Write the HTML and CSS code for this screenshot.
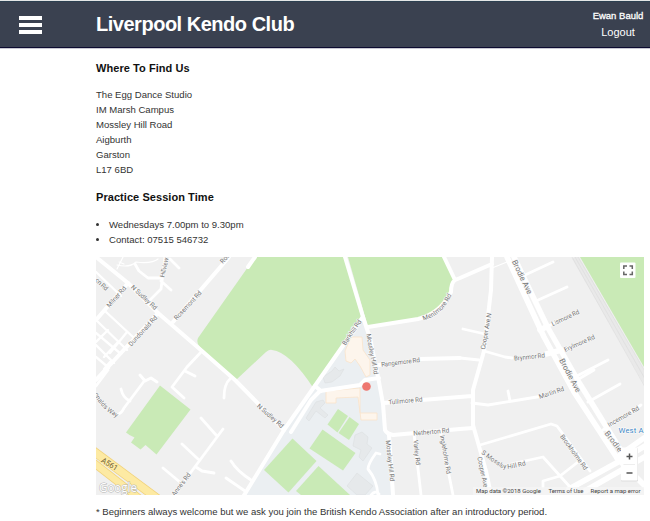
FILE: index.html
```html
<!DOCTYPE html>
<html lang="en">
<head>
<meta charset="utf-8">
<title>Liverpool Kendo Club</title>
<link rel="stylesheet" href="styles.css">
</head>
<body>
<header class="bar">
  <div class="menu" aria-label="Menu"><span></span><span></span><span></span></div>
  <h1 class="title"><span>Liverpool Kendo Club</span></h1>
  <div class="user"><span class="name">Ewan Bauld</span><span class="logout">Logout</span></div>
</header>
<main class="content">
  <h2 class="head">Where To Find Us</h2>
  <p class="address">The Egg Dance Studio<br>IM Marsh Campus<br>Mossley Hill Road<br>Aigburth<br>Garston<br>L17 6BD</p>
  <h2 class="head second">Practice Session Time</h2>
  <ul class="times"><li>Wednesdays 7.00pm to 9.30pm</li><li>Contact: 07515 546732</li></ul>
  <div class="map">
    <svg class="canvas" viewBox="96 257 548 238" width="548" height="238">
      <rect x="96" y="257" width="548" height="238" fill="#f0f0f0"/>
      <!-- campus -->
      <path d="M362 318L366 330L378 378L382 400L384 430L390 440L392 495H244L284 430L318 382Z" fill="#ebeff2"/>
      <!-- parks -->
      <g fill="#c9eab6">
        <path d="M255 257H345L361 316L314 389Q290 352 272 350Q270 349 266 352L236 380L200 347Q196 343 198 338Z"/>
        <path d="M348 257H444L454 281Q448 298 444 303Q434 316 418 319L368 327Z"/>
        <path d="M580 257H644V367Z"/>
        <path d="M160 385.500L190.500 409.500L156.500 454.500L145.500 445L140.500 449.500L131 442.500L134.500 437.500L129.500 435L126 432.500Z"/>
        <path d="M338 409L348 416L337.500 432.500L327.500 424.500Z"/><path d="M349.500 417L359 424L349 440L338.500 433Z"/>
        <path d="M322.500 429.500L355.500 453L343 470.500L309.500 448.500Z"/>
        <path d="M292.500 438.500L316.500 461L288.500 492.500L264 470Z"/>
        <path d="M318.500 466L350 495H301L296 491Z"/>
      </g>
      <!-- buildings -->
      <g fill="#e6e9eb" stroke="#dcdfe1" stroke-width=".6">
        <path d="M323 377L332 371L335 367L339 371L344 369L340 376L332 382L325 383Z"/>
        <path d="M306 418L316 402L323 400L325 403L320 408L328 415L325 418L316 411L309 421Z"/>
        <path d="M355 435L362 432L368 437L367 444L372 448L363 461L359 457L361 450L353 446Z"/>
        <path d="M357 473L373 486L365 495H357L347 486Z"/>
      </g>
      <g fill="#fdf5ec" stroke="#fae3ca" stroke-width=".8">
        <path d="M351 337H362L363 350L370 360L370 375L366 377L360 366L355 359L351 363L346 361L345 351Z"/>
        <path d="M326 391L360 388V413H377V420H361L358 397L336 398V403H326Z"/>
      </g>
      <!-- railway -->
      <path d="M575 257L648 384" stroke="#e9e9e9" stroke-width="7" fill="none"/>
      <path d="M572 257L645 387M575 257L648 384M578 257L646 373" stroke="#d8d8d8" stroke-width=".5" fill="none"/>
      <!-- trunk road -->
      <g fill="none"><path d="M92 450L158 499" stroke="#f1d27b" stroke-width="9"/><path d="M92 450L158 499" stroke="#fdeaa3" stroke-width="7.500"/>
      <path d="M90 460L140 499" stroke="#f1d27b" stroke-width="8"/><path d="M90 460L140 499" stroke="#fdeaa3" stroke-width="6.500"/></g>
      <!-- minor streets -->
      <g class="street fine"><path d="M117 269L123 257M117 265Q130 268 136 262Q152 264 158 259M119 262L124 264M492 268L507 262"/></g>
      <g class="street minor">
        <path d="M96 272L121 296M105 311L133 337M96 320L127 350M96 333L121 354M96 345L114 363M96 357L109 368M127 332L110 353M118 342L104 357M96 342L108 330M104 369L110 362"/>
      </g>
      <g class="street side">
        <path d="M135 264L139 271L148 278H162M165 257L161 289L149 301M161 281L171 290M170 259L179 268"/>
        <path d="M202 351L187 367L172 387L184 398M185 371L195 376M140 375L145 381L151 378L157 382M145 380L124 408Q121 415 115 415M121 389Q123 398 130 401M96 386L108 370"/>
        <path d="M201 418L216 435M223 429L174 495M182 444L198 459M163 468L181 483M196 467L202 471L214 473M230 379Q224 384 224 398M231 461Q237 471 251 480M226 478L245 491"/>
        <path d="M463 329L485 334M460 358L479 360M484 351L505 357L512 358M525 275L553 262M536 301L567 287M545 328L558 321M555 353L567 348M575 377L608 360M588 402L620 384M603 430L641 405M577 380L594 370M472 403L488 405L543 396M510 401L508 391M480 445L551 424L557 426L590 471M511 464L543 457L570 487M543 487V481L560 476L578 462M414 434L421 495M440 430L453 495M380 454L376 453Q368 464 368 469Q377 480 378 495M371 495Q375 490 379 494"/>
      </g>
      <g class="street main">
        <path d="M128 283L96 320M158 313L96 380M173 322L229 257M248 267L255 257"/>
        <path d="M96 257L128 283L158 313L202 351L235 380L284 430"/>
        <path d="M363 317L284 430L243 497"/>
        <path d="M291 432L311 400L320 391L360 385L365 380L379 378M315 386L321 391"/>
        <path d="M345 257L363 317L370 338L379 382L383 404L385 430Q387 434 393 435L460 429L473 428"/>
        <path d="M389 435L393 495M368 327L418 319Q440 314 451 292Q451 283 455 280L460 278L492 264M455 280L444 257M379 365L394 363M420 359L460 358M384 403L472 396M492 257L491 290L484 351L473 390L473 425L486 471L491 495"/>
      </g>
      <g class="street avenue">
        <path d="M507 257L544 337L574 392L617 458"/><path d="M514 257L548 328L580 384L620 449"/>
        <path d="M540 330L546 327M546 354L562 350M620 455L644 438M569 489L620 461L648 444M585 491L648 455M617 458L646 487"/>
      </g>
      <g class="labels">
        <text transform="translate(101.500 284.500)rotate(43)" textLength="15">on Rd</text>
        <text transform="translate(116.500 297)rotate(-49)" textLength="26">Milner Rd</text>
        <text transform="translate(144 297.500)rotate(43)" textLength="33">N Sudley Rd</text>
        <text transform="translate(164.500 267.500)rotate(-77)" textLength="20">Hillview</text>
        <text transform="translate(188 305.500)rotate(-47)" textLength="37">Rosemont Rd</text>
        <text transform="translate(225 258.500)rotate(-47)">Ros</text>
        <text transform="translate(143 331)rotate(-47)" textLength="39">Dundonald Rd</text>
        <text transform="translate(352 332.500)rotate(-56)" textLength="29">Barkhill Rd</text>
        <text transform="translate(372 354)rotate(79)" textLength="41">Mossley Hill Rd</text>
        <text transform="translate(400.500 362.500)rotate(-7)" textLength="39">Rangemore Rd</text>
        <path id="ment" d="M423.500 320.500Q443 315 452 294" fill="none" stroke="none"/>
        <text class="along"><textPath href="#ment">Mentmore Rd</textPath></text>
        <text transform="translate(565.500 318)rotate(-25)" textLength="30">Lismore Rd</text>
        <text transform="translate(579.500 343.500)rotate(-24)" textLength="33">Erylmore Rd</text>
        <text transform="translate(529.500 357)rotate(-6)" textLength="31">Brynmor Rd</text>
        <text transform="translate(486.300 331.300)rotate(-80)" textLength="37">Cooper Ave N</text>
        <text transform="translate(551.500 393)rotate(-19)" textLength="26">Martin Rd</text>
        <text transform="translate(623.500 416.500)rotate(-30)" textLength="35">Incemore Rd</text>
        <text transform="translate(573.700 452.300)rotate(54)" textLength="42">Brockholme Rd</text>
        <path id="smoss" d="M481 453.500L500 467Q505 471 526 465" fill="none" stroke="none"/>
        <text class="along"><textPath href="#smoss">S Mossley Hill Rd</textPath></text>
        <text transform="translate(482.500 472)rotate(78)" textLength="31">Cooper Ave</text>
        <text transform="translate(405.500 401)rotate(-5)" textLength="34">Tullimore Rd</text>
        <text transform="translate(431.300 432)rotate(-5)" textLength="36">Netherton Rd</text>
        <text transform="translate(390 460.700)rotate(84)" textLength="41">Mossley Hill Rd</text>
        <text transform="translate(416.700 452.500)rotate(84)" textLength="25">Varley Rd</text>
        <text transform="translate(445.300 454.500)rotate(80)" textLength="39">Ingleholme Rd</text>
        <text transform="translate(270.200 416)rotate(41)" textLength="33">N Sudley Rd</text>
        <path id="way" d="M94 394Q101 410 120 419" fill="none" stroke="none"/>
        <text class="along"><textPath href="#way">onalds Way</textPath></text>
        <text transform="translate(181.300 484.500)rotate(-53)" textLength="27">Anne's Rd</text>
        <g class="big">
          <text transform="translate(522 277)rotate(64)" textLength="37">Brodie Ave</text>
          <text transform="translate(570 375.500)rotate(62)" textLength="37">Brodie Ave</text>
          <text transform="translate(613.500 441.500)rotate(52)" textLength="24">Brodie</text>
          <text class="trunk" transform="translate(109.500 464.300)rotate(32)" textLength="18">A561</text>
        </g>
      </g>
      <text class="place" x="618.500" y="432.500" textLength="25">West A</text>
      <circle cx="366.500" cy="386.500" r="4.300" fill="#ee7770"/>
      <text class="logo" x="99" y="491.500" textLength="38" lengthAdjust="spacingAndGlyphs">Google</text>
      <rect x="473" y="487" width="171" height="8" fill="#f5f5f5" fill-opacity=".75"/>
      <g class="credit"><text x="476" y="493.200" textLength="65">Map data ©2018 Google</text><text x="548.500" y="493.200" textLength="35">Terms of Use</text><text x="590.500" y="493.200" textLength="50">Report a map error</text></g>
      <rect x="620" y="262.500" width="15.500" height="15.500" rx="1" fill="#fff"/>
      <path d="M623.800 269V266H627M629.500 266H632.300V269M632.300 271.500V274.500H629.500M627 274.500H623.800V271.500" fill="none" stroke="#666" stroke-width="1.500"/>
      <rect x="621" y="448" width="17" height="33.500" rx="1" fill="#ddd"/><rect x="621" y="447.500" width="16.500" height="33" rx="1" fill="#fff"/>
      <path d="M623.500 464.500H635" stroke="#e6e6e6" stroke-width=".7"/>
      <path d="M626.500 456.500H632.500M629.500 453.500V459.500M626.500 473H632.500" stroke="#555" stroke-width="1.500"/>
    </svg>
  </div>
  <p class="note">* Beginners always welcome but we ask you join the British Kendo Association after an introductory period.</p>
</main>
</body>
</html>
```
FILE: styles.css
```css
* { box-sizing: border-box; }
body { margin: 0; height: 521px; overflow: hidden; background: #fff; color: #333; font-family: "Liberation Sans", Arial, sans-serif; }
.bar { display: flex; height: 49px; padding-top: 1px; background: #3a4150; border-top: 1px solid #e4e6e6; border-bottom: 1px solid #c9c9d2; box-shadow: inset 0 1px #2c4051, inset 0 -1px #0c0b30; }
.menu { display: flex; flex-direction: column; gap: 3px; width: 96px; padding: 14px 0 0 19px; }
.menu span { width: 23px; height: 4px; background: #fff; }
.title { flex: 1; margin: 0; color: #fff; font-size: 20px; line-height: 45px; letter-spacing: -.48px; }
.user { display: flex; flex-direction: column; align-items: center; width: 64px; padding-top: 6px; color: #fff; }
.name { font-size: 9.500px; line-height: 15px; -webkit-text-stroke: .3px #fff; white-space: nowrap; }
.logout { font-size: 11px; line-height: 18px; }
.content { width: 548px; margin-left: 96px; }
.head { margin: 0; padding-top: 13px; font-size: 11px; line-height: 13px; color: #111; letter-spacing: .06px; }
.second { padding-top: 14px; }
.address { margin: 12px 0 0; font-size: 9.550px; line-height: 15px; }
.times { margin: 13px 0 0; padding-left: 13px; font-size: 9.550px; line-height: 15px; }
.map { height: 238px; margin-top: 10px; }
.canvas { display: block; }
.note { margin: 9px 0 0; font-size: 9.550px; line-height: 15px; white-space: nowrap; }
.street { fill: none; stroke: #fff; stroke-linecap: round; stroke-linejoin: round; }
.fine { stroke-width: 1.200px; }
.minor { stroke-width: 2.300px; }
.side { stroke-width: 2.800px; }
.main { stroke-width: 4px; }
.avenue { stroke-width: 5.500px; }
.labels { font: 6.500px Roboto, sans-serif; fill: #757575; stroke: #f8f8f8; stroke-width: 1.200px; paint-order: stroke; text-anchor: middle; dominant-baseline: central; }
.along { text-anchor: start; dominant-baseline: auto; }
.big { font-size: 7.800px; }
.trunk { fill: #75663a; stroke: #fdeaa3; }
.place { font: 7.800px Roboto, sans-serif; fill: #3f87c4; stroke: #fff; stroke-width: 1px; paint-order: stroke; }
.logo { font: 12.500px "Open Sans", sans-serif; fill: #fff; stroke: #b5b5b5; stroke-width: 1px; paint-order: stroke; }
.credit { font: 6px Roboto, sans-serif; fill: #444; }
```
